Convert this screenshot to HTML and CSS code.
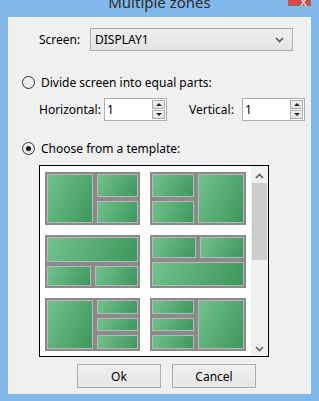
FILE: index.html
```html
<!DOCTYPE html>
<html lang="en">
<head>
    <meta charset="UTF-8">
    <title>Multiple zones</title>
    <link rel="stylesheet" href="styles.css">
</head>
<body>
    <div class="window">
        <div class="titlebar">
            <span class="title">Multiple zones</span>
            <div class="close">X</div>
        </div>

        <div class="client">
            <div class="screen-row">
                <span class="screen-label">Screen:</span>
                <div class="select">
                    <span>DISPLAY1</span>
                    <svg width="9" height="6" viewBox="0 0 9 6"><polyline points="1,1 4.5,4.5 8,1" fill="none" stroke="#555" stroke-width="1.6"/></svg>
                </div>
            </div>

            <div class="radio-row first">
                <span class="radio"></span>
                <span>Divide screen into equal parts:</span>
            </div>

            <div class="parts-row">
                <span class="parts-label">Horizontal:</span>
                <div class="spin">
                    <span class="spin-value">1</span>
                    <div class="spin-btns">
                        <div class="spin-btn"><span class="arrow-up"></span></div>
                        <div class="spin-btn"><span class="arrow-down"></span></div>
                    </div>
                </div>
                <span class="parts-label vertical">Vertical:</span>
                <div class="spin">
                    <span class="spin-value">1</span>
                    <div class="spin-btns">
                        <div class="spin-btn"><span class="arrow-up"></span></div>
                        <div class="spin-btn"><span class="arrow-down"></span></div>
                    </div>
                </div>
            </div>

            <div class="radio-row second">
                <span class="radio checked"></span>
                <span>Choose from a template:</span>
            </div>

            <div class="templates">
                <div class="tiles">
                    <!-- big left, two stacked right -->
                    <div class="tile cols">
                        <div class="zone"></div>
                        <div class="stack"><div class="zone"></div><div class="zone"></div></div>
                    </div>
                    <!-- two stacked left, big right -->
                    <div class="tile cols">
                        <div class="stack"><div class="zone"></div><div class="zone"></div></div>
                        <div class="zone"></div>
                    </div>
                    <!-- wide top, two bottom -->
                    <div class="tile rows">
                        <div class="zone"></div>
                        <div class="pair"><div class="zone"></div><div class="zone"></div></div>
                    </div>
                    <!-- two top, wide bottom -->
                    <div class="tile rows">
                        <div class="pair"><div class="zone"></div><div class="zone"></div></div>
                        <div class="zone"></div>
                    </div>
                    <!-- big left, three stacked right -->
                    <div class="tile cols">
                        <div class="zone"></div>
                        <div class="stack"><div class="zone"></div><div class="zone"></div><div class="zone"></div></div>
                    </div>
                    <!-- three stacked left, big right -->
                    <div class="tile cols">
                        <div class="stack"><div class="zone"></div><div class="zone"></div><div class="zone"></div></div>
                        <div class="zone"></div>
                    </div>
                </div>
                <div class="scrollbar">
                    <svg class="sb-arrow" width="9" height="6" viewBox="0 0 9 6"><polyline points="1,5 4.5,1.5 8,5" fill="none" stroke="#606060" stroke-width="1.6"/></svg>
                    <div class="sb-track"><div class="sb-thumb"></div></div>
                    <svg class="sb-arrow" width="9" height="6" viewBox="0 0 9 6"><polyline points="1,1 4.5,4.5 8,1" fill="none" stroke="#606060" stroke-width="1.6"/></svg>
                </div>
            </div>

            <div class="buttons">
                <button class="btn">Ok</button>
                <button class="btn">Cancel</button>
            </div>
        </div>
    </div>
</body>
</html>
```

FILE: styles.css
```css
* {
    margin: 0;
    padding: 0;
    box-sizing: border-box;
}

html, body {
    width: 319px;
    height: 401px;
    overflow: hidden;
}

body {
    font-family: 'Noto Sans', 'Open Sans', sans-serif;
    font-size: 12px;
    color: #000;
    background: #80b9ea;
}

.window {
    padding: 0 8px 7px 8px;
}

.titlebar {
    position: relative;
    height: 17px;
    display: flex;
    justify-content: center;
    overflow: hidden;
}

.title {
    font-size: 15px;
    line-height: 20px;
    margin-top: -8px;
    color: #2b2b2b;
}

.close {
    position: absolute;
    top: 0;
    right: -8px;
    width: 31px;
    height: 6px;
    background: #c75050;
    color: #fff;
    font-size: 13px;
    line-height: 4px;
    text-align: center;
    overflow: hidden;
}

.client {
    height: 377px;
    background: #f0f0f0;
    padding-top: 11px;
}

.screen-row {
    display: flex;
    align-items: center;
    padding-left: 31px;
}

.screen-label {
    width: 51px;
}

.select {
    width: 203px;
    height: 23px;
    border: 1px solid #acacac;
    background: linear-gradient(#efefef, #e3e3e3);
    display: flex;
    align-items: center;
    justify-content: space-between;
    padding: 0 8px 0 4px;
}

.radio-row {
    display: flex;
    align-items: center;
    gap: 6px;
    padding-left: 14px;
    height: 16px;
}

.radio-row.first {
    margin-top: 23px;
}

.radio-row.second {
    margin-top: 19px;
}

.radio {
    width: 13px;
    height: 13px;
    border-radius: 50%;
    border: 1px solid #333;
    background: linear-gradient(#f4f4f4, #e6e6e6);
    display: flex;
    align-items: center;
    justify-content: center;
}

.radio.checked::after {
    content: "";
    width: 5px;
    height: 5px;
    border-radius: 50%;
    background: #1a1a1a;
}

.parts-row {
    display: flex;
    align-items: center;
    padding-left: 31px;
    margin-top: 8px;
}

.parts-label {
    width: 65px;
}

.parts-label.vertical {
    width: 53px;
    margin-left: 22px;
}

.spin {
    width: 63px;
    height: 23px;
    border: 1px solid #abadb3;
    background: #fff;
    display: flex;
    align-items: center;
    justify-content: space-between;
    padding: 0 1px 0 2px;
}

.spin-btns {
    display: flex;
    flex-direction: column;
    gap: 1px;
}

.spin-btn {
    width: 13px;
    height: 9px;
    border: 1px solid #acacac;
    background: linear-gradient(#f2f2f2, #e2e2e2);
    display: flex;
    align-items: center;
    justify-content: center;
}

.arrow-up, .arrow-down {
    width: 0;
    height: 0;
    border-left: 3px solid transparent;
    border-right: 3px solid transparent;
}

.arrow-up {
    border-bottom: 3px solid #222;
}

.arrow-down {
    border-top: 3px solid #222;
}

.templates {
    width: 230px;
    height: 192px;
    margin: 9px 0 0 31px;
    border: 1px solid #000;
    background: #fff;
    display: flex;
    justify-content: space-between;
}

.tiles {
    display: grid;
    grid-template-columns: 95px 96px;
    grid-auto-rows: 53px;
    column-gap: 10px;
    row-gap: 10px;
    padding: 6px 0 0 5px;
}

.tile {
    display: flex;
}

.tile.rows {
    flex-direction: column;
}

.tile > *, .stack > *, .pair > * {
    flex: 1;
}

.stack {
    display: flex;
    flex-direction: column;
}

.pair {
    display: flex;
}

.zone {
    border: 2px solid #8a8a8a;
    box-shadow: inset 0 0 0 1px #b9b9b9;
    background: linear-gradient(115deg, #74c28d, #3b975a);
}

.scrollbar {
    width: 17px;
    background: #f0f0f0;
    display: flex;
    flex-direction: column;
    align-items: center;
    padding: 7px 0 4px;
}

.sb-track {
    flex: 1;
    width: 100%;
    padding: 4px 1px 0;
}

.sb-thumb {
    height: 77px;
    background: #cdcdcd;
}

.buttons {
    display: flex;
    gap: 11px;
    padding-left: 69px;
    margin-top: 7px;
}

.btn {
    width: 84px;
    height: 24px;
    border: 1px solid #acacac;
    background: linear-gradient(#f0f0f0, #e5e5e5);
    font-family: inherit;
    font-size: 12px;
    color: #000;
}
```
